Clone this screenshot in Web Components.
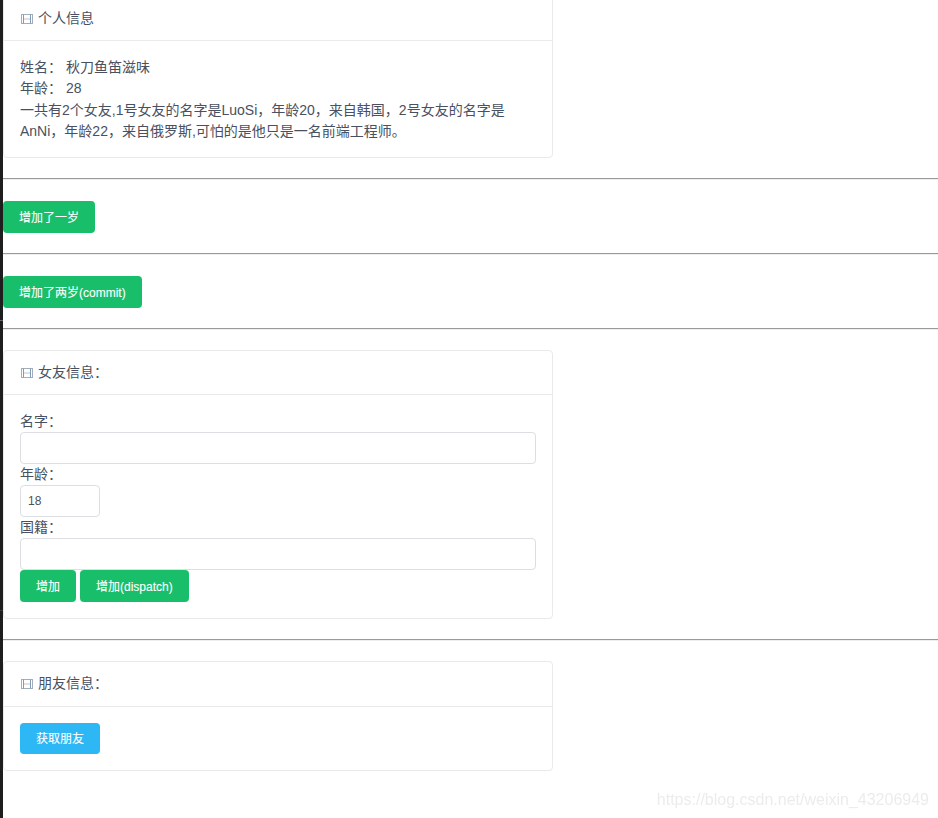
<!DOCTYPE html>
<html lang="zh">
<head>
<meta charset="utf-8">
<title>vuex demo</title>
<style>
  html, body { margin: 0; height: 100%; overflow: hidden; background: #fff; }
  body {
    font: 14px/21px "Liberation Sans", "Noto Sans CJK SC", sans-serif;
    color: #495060;
  }
</style>
</head>
<body>
<demo-page>
  <film-card heading="个人信息">
    <div>姓名： 秋刀鱼笛滋味</div>
    <div>年龄： 28</div>
    <div style="padding-top:1px;margin-bottom:-1px">一共有2个女友,1号女友的名字是LuoSi，年龄20，来自韩国，2号女友的名字是AnNi，年龄22，来自俄罗斯,可怕的是他只是一名前端工程师。</div>
  </film-card>
  <page-rule></page-rule>
  <button-row><ui-button>增加了一岁</ui-button></button-row>
  <page-rule></page-rule>
  <button-row><ui-button>增加了两岁(commit)</ui-button></button-row>
  <page-rule></page-rule>
  <film-card heading="女友信息：">
    <form-field label="名字："></form-field>
    <form-field label="年龄：" value="18" width="80px"></form-field>
    <form-field label="国籍："></form-field>
    <div style="display:flex;gap:4px">
      <ui-button>增加</ui-button>
      <ui-button>增加(dispatch)</ui-button>
    </div>
  </film-card>
  <page-rule></page-rule>
  <film-card heading="朋友信息：" head-pad="1px">
    <ui-button kind="info">获取朋友</ui-button>
  </film-card>
</demo-page>

<script>
class DemoPage extends HTMLElement {
  constructor() {
    super();
    this.attachShadow({ mode: 'open' });
    this.shadowRoot.innerHTML = `<style>
      :host { display: flex; height: 818px; position: relative; overflow: hidden; }
      .strip {
        flex: 0 0 3px;
        background: linear-gradient(#1e1e1e 320px, #6a6a6a 320px, #6a6a6a 321px, #1e1e1e 321px, #1e1e1e 610px, #3a3a3a 610px, #3a3a3a 611px, #1e1e1e 611px);
      }
      .content { flex: 1; min-width: 0; margin-top: -4px; }
      .mark {
        position: absolute; right: 9px; bottom: 8px;
        font-size: 16px; line-height: 20px; color: #ececec;
        filter: blur(.3px);
      }
    </style>
    <div class="strip"></div>
    <div class="content"><slot></slot></div>
    <div class="mark">https://blog.csdn.net/weixin_43206949</div>`;
  }
}

class FilmCard extends HTMLElement {
  constructor() {
    super();
    this.attachShadow({ mode: 'open' });
    this.shadowRoot.innerHTML = `<style>
      :host { display: block; width: 550px; box-sizing: border-box; border: 1px solid #e9eaec; border-radius: 4px; background: #fff; }
      header {
        display: flex; align-items: center; gap: 5px;
        height: 43px; padding: 0 16px; border-bottom: 1px solid #e9eaec;
      }
      svg { display: block; flex: none; margin-top: 1px; }
      .body { padding: 16px; }
    </style>
    <header>
      <svg width="13" height="12" viewBox="0 0 13 12" fill="none">
        <rect x="1.5" y="1.5" width="11" height="9" stroke="#a3aeba"/>
        <path d="M3.5 1.5v9M10.5 1.5v9" stroke="#7f9db8"/>
        <path d="M4 6h6" stroke="#b9c4ce"/>
      </svg>
      <span class="title"></span>
    </header>
    <div class="body"><slot></slot></div>`;
  }

  connectedCallback() {
    this.shadowRoot.querySelector('.title').textContent = this.getAttribute('heading');
    const pad = this.getAttribute('head-pad');
    if (pad) this.shadowRoot.querySelector('header').style.paddingBottom = pad;
  }
}

class PageRule extends HTMLElement {
  constructor() {
    super();
    this.attachShadow({ mode: 'open' });
    this.shadowRoot.innerHTML = `<style>
      :host { display: block; height: 2px; margin: 20px 0; box-sizing: border-box;
        border-top: 1px solid #9a9a9a; border-bottom: 1px solid #eeeeee; }
    </style>`;
  }
}

class ButtonRow extends HTMLElement {
  constructor() {
    super();
    this.attachShadow({ mode: 'open' });
    this.shadowRoot.innerHTML = `<style>
      :host { display: flex; padding-top: 1px; }
    </style><slot></slot>`;
  }
}

class UiButton extends HTMLElement {
  constructor() {
    super();
    this.attachShadow({ mode: 'open' });
    this.shadowRoot.innerHTML = `<style>
      :host { display: inline-block; }
      button {
        display: block; box-sizing: border-box; height: 32px; padding: 0 16px 2px; border: 0; border-radius: 4px;
        font: 12px "Liberation Sans", "Noto Sans CJK SC", sans-serif;
        -webkit-text-stroke: .1px #fff;
        color: #fff; background: #19be6b; white-space: nowrap;
      }
      :host([kind="info"]) button { background: #2db7f5; height: 31px; }
    </style><button type="button"><slot></slot></button>`;
  }
}

class FormField extends HTMLElement {
  constructor() {
    super();
    this.attachShadow({ mode: 'open' });
    this.shadowRoot.innerHTML = `<style>
      :host { display: block; }
      label { display: block; }
      input {
        display: block; box-sizing: border-box; width: 100%; height: 32px;
        padding: 4px 7px; border: 1px solid #dddee1; border-radius: 4px; outline: 0;
        font: 12px "Liberation Sans", "Noto Sans CJK SC", sans-serif; color: #495060; background: #fff;
      }
    </style><label></label><input type="text">`;
  }

  connectedCallback() {
    const input = this.shadowRoot.querySelector('input');
    this.shadowRoot.querySelector('label').textContent = this.getAttribute('label');
    input.value = this.getAttribute('value') || '';
    if (this.hasAttribute('width')) input.style.width = this.getAttribute('width');
  }
}

customElements.define('demo-page', DemoPage);
customElements.define('film-card', FilmCard);
customElements.define('page-rule', PageRule);
customElements.define('button-row', ButtonRow);
customElements.define('ui-button', UiButton);
customElements.define('form-field', FormField);
</script>
</body>
</html>
